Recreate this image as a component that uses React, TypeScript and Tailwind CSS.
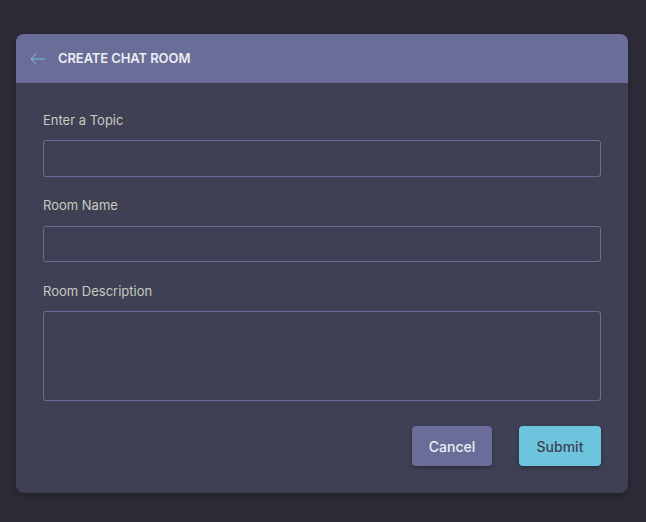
import React from "react";

export default function App() {
  return (
    <div
      className="w-[646px] h-[522px] bg-[#2c2b37] pt-[34px] px-[16px]"
      style={{ fontFamily: "Inter, 'Noto Sans', sans-serif" }}
    >
      <div className="w-[612px] rounded-lg overflow-hidden bg-[#404055] shadow-[0_2px_6px_rgba(0,0,0,0.25)]">
        <div className="h-[49px] bg-[#6b6d99] flex items-center pl-[14px]">
          <svg width="16" height="14" viewBox="0 0 16 14" fill="none" stroke="#6fc6de" strokeWidth="1">
            <path d="M15 7H1M6.5 1.5L1 7L6.5 12.5" />
          </svg>
          <span className="ml-[12px] text-[13px] font-semibold text-[#eceef2] tracking-[-0.1px]">CREATE CHAT ROOM</span>
        </div>
        <div className="px-[27px] pt-[27px] pb-[27px] flex flex-col">
          <label className="text-[13px] leading-[20px] text-[#c6cbc0]">Enter a Topic</label>
          <input className="mt-[10px] h-[37px] border border-[#6b6d99] rounded-[3px] bg-transparent outline-none" />
          <label className="mt-[18px] text-[13px] leading-[20px] text-[#c6cbc0]">Room Name</label>
          <input className="mt-[11px] h-[36px] border border-[#6b6d99] rounded-[3px] bg-transparent outline-none" />
          <label className="mt-[19px] text-[13px] leading-[20px] text-[#c6cbc0]">Room Description</label>
          <textarea className="mt-[10px] h-[90px] border border-[#6b6d99] rounded-[3px] bg-transparent outline-none resize-none" />
          <div className="mt-[25px] flex justify-end gap-[27px]">
            <button className="w-[80px] h-[40px] rounded-[4px] bg-[#6b6d99] text-[#eceef2] text-[14px] font-medium shadow-[0_2px_4px_rgba(0,0,0,0.3)]">
              Cancel
            </button>
            <button className="w-[82px] h-[40px] rounded-[4px] bg-[#6cc5dd] text-[#404055] text-[14px] font-medium shadow-[0_2px_4px_rgba(0,0,0,0.3)]">
              Submit
            </button>
          </div>
        </div>
      </div>
    </div>
  );
}
